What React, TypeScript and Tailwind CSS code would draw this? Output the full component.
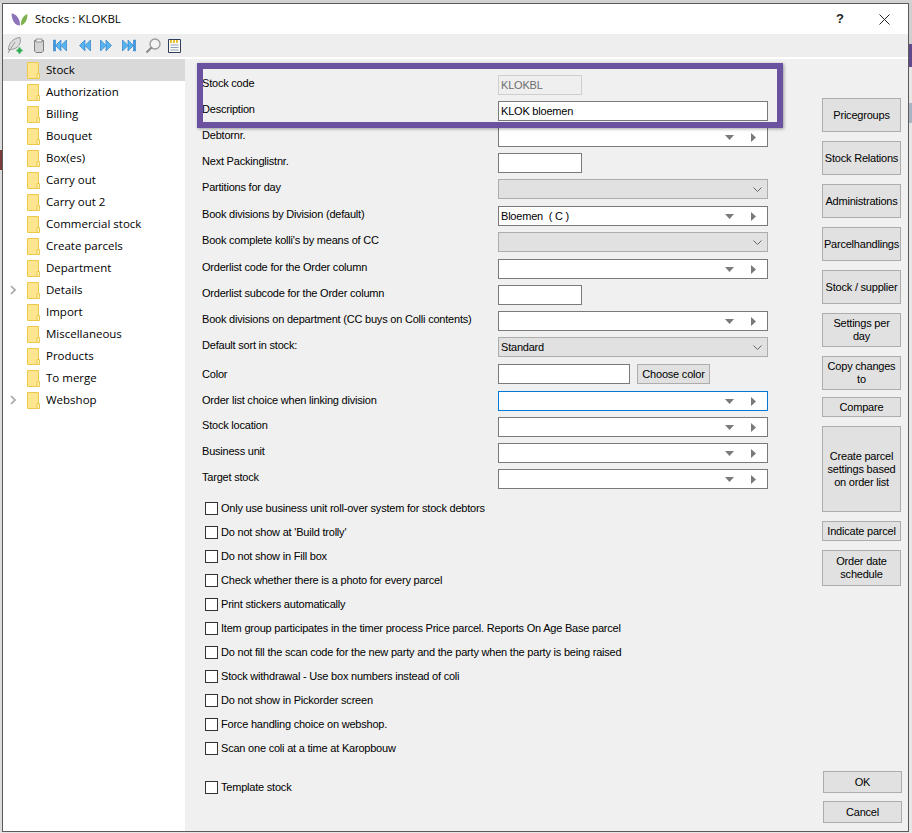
const treeItems = [
  { label: 'Stock', active: true },
  { label: 'Authorization' },
  { label: 'Billing' },
  { label: 'Bouquet' },
  { label: 'Box(es)' },
  { label: 'Carry out' },
  { label: 'Carry out 2' },
  { label: 'Commercial stock' },
  { label: 'Create parcels' },
  { label: 'Department' },
  { label: 'Details', expandable: true },
  { label: 'Import' },
  { label: 'Miscellaneous' },
  { label: 'Products' },
  { label: 'To merge' },
  { label: 'Webshop', expandable: true },
];

type RowKind = 'disabled' | 'text' | 'short' | 'lookup' | 'select' | 'color' | 'focus';

interface FormRow {
  label: string;
  kind: RowKind;
  value?: string;
  height: string;
  labelTop: string;
}

const formRows: FormRow[] = [
  { label: 'Stock code', kind: 'disabled', value: 'KLOKBL', height: 'h-[26px]', labelTop: 'pt-0' },
  { label: 'Description', kind: 'text', value: 'KLOK bloemen', height: 'h-[26px]', labelTop: 'pt-0' },
  { label: 'Debtornr.', kind: 'lookup', height: 'h-[26px]', labelTop: 'pt-0' },
  { label: 'Next Packinglistnr.', kind: 'short', height: 'h-[26px]', labelTop: 'pt-0' },
  { label: 'Partitions for day', kind: 'select', height: 'h-[27px]', labelTop: 'pt-0' },
  { label: 'Book divisions by Division (default)', kind: 'lookup', value: 'Bloemen  ( C )', height: 'h-[26px]', labelTop: 'pt-0' },
  { label: "Book complete kolli's by means of CC", kind: 'select', height: 'h-[27px]', labelTop: 'pt-0' },
  { label: 'Orderlist code for the Order column', kind: 'lookup', height: 'h-[26px]', labelTop: 'pt-0' },
  { label: 'Orderlist subcode for the Order column', kind: 'short', height: 'h-[26px]', labelTop: 'pt-0' },
  { label: 'Book divisions on department (CC buys on Colli contents)', kind: 'lookup', height: 'h-[26px]', labelTop: 'pt-0' },
  { label: 'Default sort in stock:', kind: 'select', value: 'Standard', height: 'h-[27px]', labelTop: 'pt-0' },
  { label: 'Color', kind: 'color', height: 'h-[27px]', labelTop: 'pt-[2px]' },
  { label: 'Order list choice when linking division', kind: 'focus', height: 'h-[26px]', labelTop: 'pt-[1px]' },
  { label: 'Stock location', kind: 'lookup', height: 'h-[26px]', labelTop: 'pt-0' },
  { label: 'Business unit', kind: 'lookup', height: 'h-[26px]', labelTop: 'pt-0' },
  { label: 'Target stock', kind: 'lookup', height: 'h-[26px]', labelTop: 'pt-0' },
];

const checks = [
  'Only use business unit roll-over system for stock debtors',
  "Do not show at 'Build trolly'",
  'Do not show in Fill box',
  'Check whether there is a photo for every parcel',
  'Print stickers automatically',
  'Item group participates in the timer process Price parcel. Reports On Age Base parcel',
  'Do not fill the scan code for the new party and the party when the party is being raised',
  'Stock withdrawal - Use box numbers instead of coli',
  'Do not show in Pickorder screen',
  'Force handling choice on webshop.',
  'Scan one coli at a time at Karopbouw',
];

const sideButtons = [
  { label: 'Pricegroups', className: 'h-[34px] mb-[9px] -ml-[1px]' },
  { label: 'Stock Relations', className: 'h-[34px] mb-[9px] -ml-[1px]' },
  { label: 'Administrations', className: 'h-[34px] mb-[9px] -ml-[1px]' },
  { label: 'Parcelhandlings', className: 'h-[34px] mb-[9px] -ml-[1px]' },
  { label: 'Stock / supplier', className: 'h-[34px] mb-[9px] -ml-[1px]' },
  { label: 'Settings per day', className: 'h-[34px] mb-[9px] -ml-[1px] px-[6px]' },
  { label: 'Copy changes to', className: 'h-[34px] mb-[7px] -ml-[1px]' },
  { label: 'Compare', className: 'h-[20px] mb-[9px] -ml-[1px]' },
  { label: 'Create parcel settings based on order list', className: 'h-[86px] mb-[9px] -ml-[1px]' },
  { label: 'Indicate parcel', className: 'h-[20px] mb-[9px] -ml-[1px]' },
  { label: 'Order date schedule', className: 'h-[36px] -ml-[1px]' },
];

function Folder() {
  return (
    <svg width="13" height="17" viewBox="0 0 13 17" className="shrink-0">
      <path d="M0.5 0.5H11.5V16.5H0.5Z" fill="#fde68f" stroke="#ecc94a" />
      <path d="M10 11.5H12.5V16.5H10Z" fill="#fff2b8" stroke="#ecc94a" />
    </svg>
  );
}

function Chevron() {
  return (
    <svg width="6" height="10" viewBox="0 0 6 10" className="shrink-0">
      <path d="M1 1L5 5L1 9" fill="none" stroke="#a6a6a6" strokeWidth="1.6" />
    </svg>
  );
}

function LookupArrows() {
  return (
    <div className="ml-auto flex items-center shrink-0">
      <svg width="9" height="5" viewBox="0 0 9 5">
        <path d="M0 0H9L4.5 5Z" fill="#7a7a7a" />
      </svg>
      <svg width="5" height="9" viewBox="0 0 5 9" className="ml-[17px] mr-[9px]">
        <path d="M0 0L5 4.5L0 9Z" fill="#7a7a7a" />
      </svg>
    </div>
  );
}

function Field({ row }: { row: FormRow }) {
  const base = 'h-[20px] flex items-center px-[2px] leading-none text-black';
  if (row.kind === 'disabled') {
    return <div className={`${base} w-[84px] bg-[#efefef] border border-[#cfcfcf] !text-[#6d6d6d]`}>{row.value}</div>;
  }
  if (row.kind === 'text') {
    return <div className={`${base} w-[270px] bg-white border border-[#7a7a7a]`}>{row.value}</div>;
  }
  if (row.kind === 'short') {
    return <div className={`${base} w-[84px] bg-white border border-[#7a7a7a]`} />;
  }
  if (row.kind === 'color') {
    return (
      <div className="flex">
        <div className={`${base} w-[132px] bg-white border border-[#7a7a7a]`} />
        <div className="ml-[7px] w-[73px] h-[20px] flex items-center justify-center bg-[#e1e1e1] border border-[#adadad] text-black">
          Choose color
        </div>
      </div>
    );
  }
  if (row.kind === 'select') {
    return (
      <div className={`${base} w-[270px] bg-[#e1e1e1] border border-[#adadad]`}>
        {row.value}
        <svg width="9" height="5" viewBox="0 0 9 5" className="ml-auto mr-[3px]">
          <path d="M0.5 0.5L4.5 4.5L8.5 0.5" fill="none" stroke="#666666" />
        </svg>
      </div>
    );
  }
  return (
    <div className={`${base} w-[270px] bg-white border ${row.kind === 'focus' ? 'border-[#0078d7]' : 'border-[#7a7a7a]'}`}>
      <span className="whitespace-pre">{row.value}</span>
      <LookupArrows />
    </div>
  );
}

function Nav({ dir, bar }: { dir: 'left' | 'right'; bar: 'start' | 'end' | 'none' }) {
  const flip = dir === 'right' ? 'scale(-1,1) translate(-14,0)' : undefined;
  return (
    <svg width="14" height="13" viewBox="0 0 14 13" className="shrink-0">
      <g transform={flip}>
        {bar !== 'none' && <path d="M0.5 1H2.5V12H0.5Z" fill="#3f9be0" stroke="#2f80c8" strokeWidth="0.6" />}
        <path d="M8 1V12L2.5 6.5Z" fill="#57b4ee" stroke="#2f80c8" strokeWidth="0.7" />
        <path d="M13.5 1V12L8 6.5Z" fill="#57b4ee" stroke="#2f80c8" strokeWidth="0.7" />
      </g>
    </svg>
  );
}

function Toolbar() {
  return (
    <div className="h-[23px] bg-[#eeeeee] flex items-center pl-[4px] shrink-0">
      <svg width="16" height="17" viewBox="0 0 16 17" className="shrink-0">
        <path d="M1.5 13C1.5 7 5 1.5 13 0.5C14.5 6 11.5 11.5 4.5 12.5Z" fill="#dedede" stroke="#969696" />
        <path d="M1 16L8 5" stroke="#969696" fill="none" />
        <path d="M9.5 13.5H15.5M12.5 10.5V16.5" stroke="#22a94a" strokeWidth="2.2" fill="none" />
      </svg>
      <svg width="12" height="15" viewBox="0 0 12 15" className="ml-[10px] shrink-0">
        <path d="M1.5 2.5H10.5V13L9 14.5H3L1.5 13Z" fill="#d4d4d4" stroke="#808080" />
        <path d="M3 1H9V4H3Z" fill="#efefef" stroke="#808080" strokeWidth="0.8" />
      </svg>
      <div className="ml-[8px]"><Nav dir="left" bar="start" /></div>
      <div className="ml-[10px]"><Nav dir="left" bar="none" /></div>
      <div className="ml-[9px]"><Nav dir="right" bar="none" /></div>
      <div className="ml-[8px]"><Nav dir="right" bar="end" /></div>
      <svg width="16" height="16" viewBox="0 0 16 16" className="ml-[9px] shrink-0">
        <circle cx="10" cy="6" r="5" fill="#f3f3f3" stroke="#9a9a9a" strokeWidth="1.3" />
        <path d="M6.5 9.5L1.5 14.5" stroke="#8a8a8a" strokeWidth="2" fill="none" />
      </svg>
      <svg width="13" height="15" viewBox="0 0 13 15" className="ml-[7px] shrink-0">
        <path d="M0.5 1.5H12.5V14.5H0.5Z" fill="#fdfdf6" stroke="#30405c" />
        <path d="M2 3.5H11" stroke="#e8c23c" strokeWidth="3" strokeDasharray="2 1" fill="none" />
        <path d="M2.5 7H10.5M2.5 9.5H10.5M2.5 12H10.5" stroke="#8fa0b8" fill="none" />
      </svg>
    </div>
  );
}

function FlatButton({ label, className }: { label: string; className: string }) {
  return (
    <div className={`${className} w-[79px] shrink-0 flex items-center justify-center text-center bg-[#e1e1e1] border border-[#adadad] leading-[13px] text-black`}>
      {label}
    </div>
  );
}

export default function App() {
  return (
    <div className="w-[912px] h-[833px] flex flex-col overflow-hidden bg-[#e6e6e6] font-['Liberation_Sans',sans-serif]">
      <div className="h-[3px] bg-[#d2d2d2]" />
      <div className="flex">
        <div className="w-[2px] flex flex-col">
          <div className="h-[147px] bg-[#dcdcdc]" />
          <div className="h-[20px] bg-[#7c3a3a]" />
          <div className="h-[662px] bg-[#dcdcdc]" />
        </div>

        <div className="w-[907px] h-[829px] border border-[#5a5a5a] bg-[#f0f0f0] flex flex-col">
          {/* title bar */}
          <div className="h-[30px] bg-white flex items-center pl-[8px] shrink-0">
            <svg width="17" height="13" viewBox="0 0 17 13" className="shrink-0">
              <path d="M0.5 0.5C5 1 9 5 9 12.5C4 12.5 1 8 0.5 0.5Z" fill="#8d74b8" />
              <path d="M16.5 1C16.5 7 14 11 10 12.5C9.5 7 12 3 16.5 1Z" fill="#7fb04f" />
            </svg>
            <span className="ml-[7px] text-[11.5px] text-black font-['Open_Sans',sans-serif]">Stocks : KLOKBL</span>
            <span className="ml-auto text-[13px] font-bold text-[#222222]">?</span>
            <svg width="11" height="11" viewBox="0 0 11 11" className="ml-[35px] mr-[18px]">
              <path d="M0.5 0.5L10.5 10.5M10.5 0.5L0.5 10.5" stroke="#222222" fill="none" />
            </svg>
          </div>

          <Toolbar />
          <div className="h-[2px] bg-white shrink-0" />

          <div className="flex flex-1 min-h-0">
            {/* tree */}
            <div className="w-[182px] bg-white shrink-0 text-[11.5px] text-black font-['Open_Sans',sans-serif]">
              {treeItems.map((item) => (
                <div key={item.label} className={`h-[22px] flex items-center ${item.active ? 'bg-[#d9d9d9]' : ''}`}>
                  <div className="w-[24px] pl-[7px] flex items-center">{item.expandable && <Chevron />}</div>
                  <Folder />
                  <span className="ml-[6px]">{item.label}</span>
                </div>
              ))}
            </div>

            {/* form */}
            <div className="relative flex flex-1 min-w-0 text-[11px] tracking-[-0.21px] text-black">
              <div className="w-[638px] shrink-0 pl-[17px] pt-[16px]">
                {formRows.map((row) => (
                  <div key={row.label} className={`${row.height} flex`}>
                    <div className={`w-[296px] shrink-0 -mt-[2px] ${row.labelTop} leading-[20px] whitespace-nowrap`}>{row.label}</div>
                    <Field row={row} />
                  </div>
                ))}

                <div className="mt-[1px] pl-[3px]">
                  {checks.map((label) => (
                    <div key={label} className="h-[24px] flex items-center">
                      <div className="w-[13px] h-[13px] bg-white border border-[#333333] shrink-0" />
                      <span className="ml-[3px] whitespace-nowrap">{label}</span>
                    </div>
                  ))}
                  <div className="h-[24px] mt-[15px] flex items-center">
                    <div className="w-[13px] h-[13px] bg-white border border-[#333333] shrink-0" />
                    <span className="ml-[3px]">Template stock</span>
                  </div>
                </div>
              </div>

              <div className="w-[79px] shrink-0 flex flex-col pt-[39px] pb-[8px]">
                {sideButtons.map((b) => (
                  <FlatButton key={b.label} label={b.label} className={b.className} />
                ))}
                <FlatButton label="OK" className="h-[22px] mt-auto mb-[8px]" />
                <FlatButton label="Cancel" className="h-[22px]" />
              </div>

              {/* annotation drawn over the screenshot */}
              <div className="absolute left-[12px] top-[4px] w-[586px] h-[65px] border-[6px] border-[#6b52a0] shadow-[1px_1px_3px_rgba(0,0,0,0.35)]" />
            </div>
          </div>
        </div>

        <div className="flex-1 flex flex-col">
          <div className="h-[41px] bg-[#cfcfcf]" />
          <div className="h-[23px] bg-[#5f4b8b]" />
          <div className="h-[36px] bg-[#e6e6e6]" />
          <div className="h-[20px] bg-[#a9b4c4]" />
          <div className="h-[709px] bg-[#e6e6e6]" />
        </div>
      </div>
    </div>
  );
}
